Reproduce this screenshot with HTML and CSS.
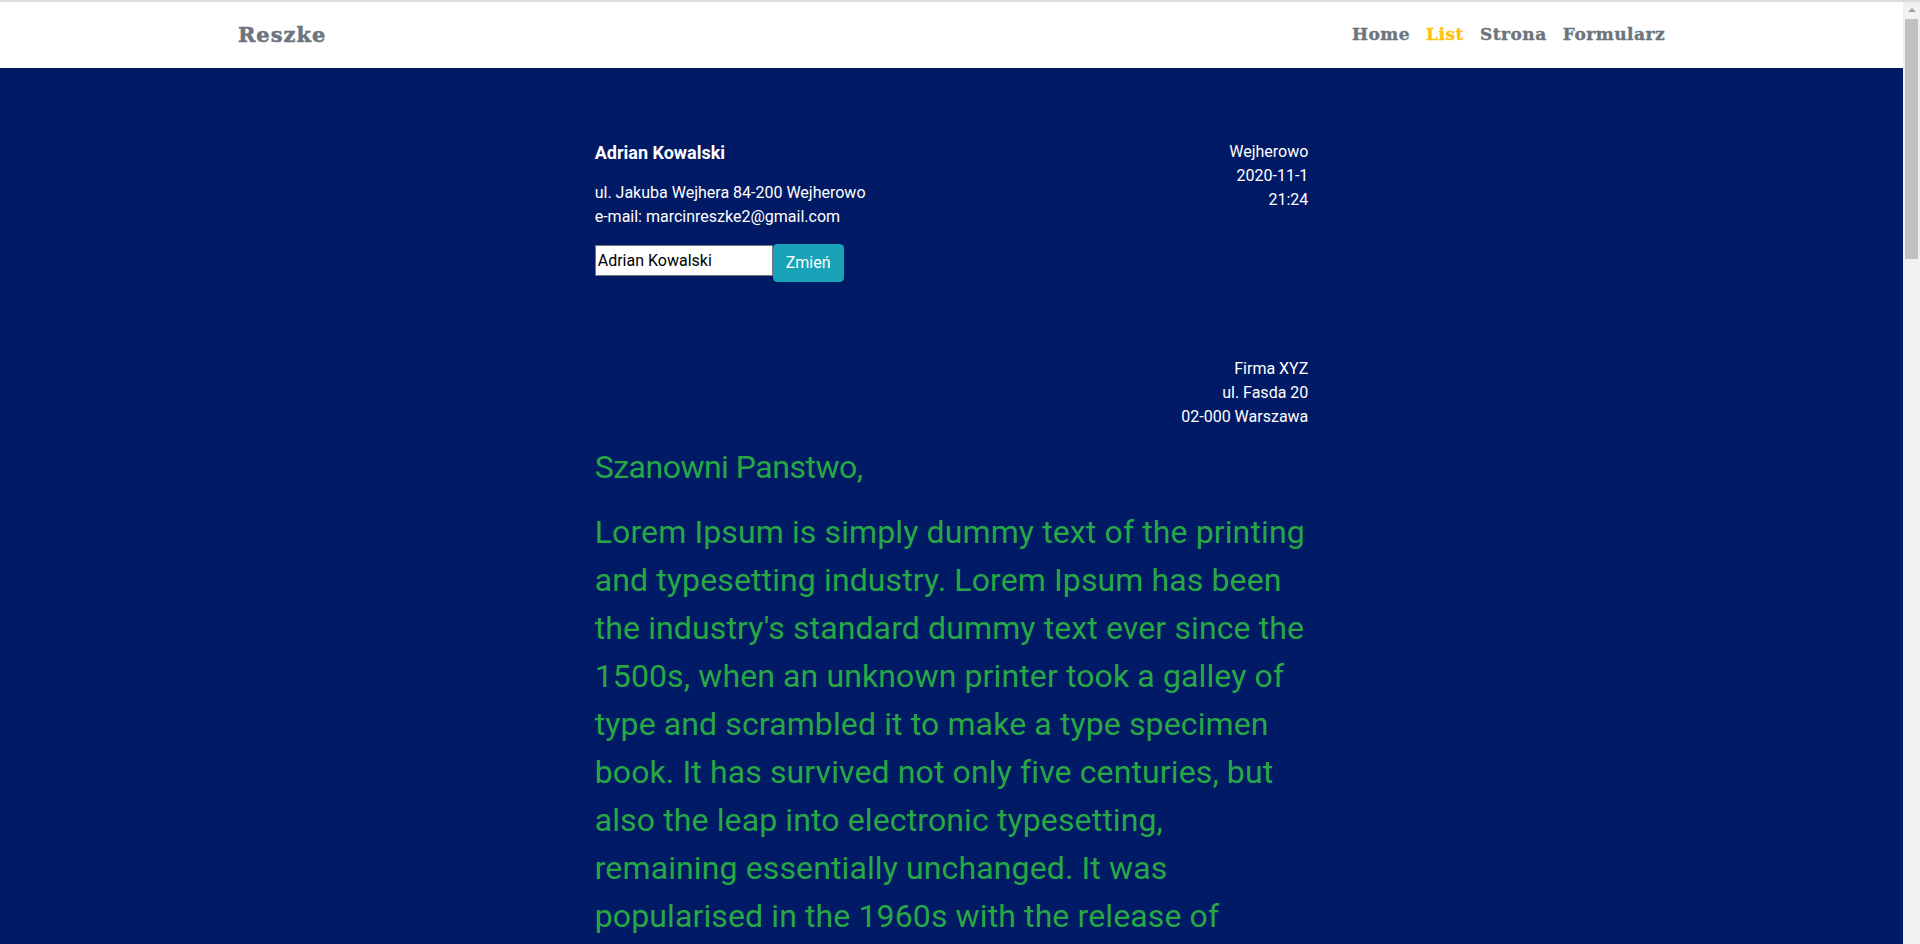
FILE: index.html
```html
<!DOCTYPE html>
<html lang="pl">
<head>
<meta charset="utf-8">
<title>Reszke - List</title>
<link rel="stylesheet" href="styles.css">
</head>
<body>
<div class="viewport">
  <header class="topbar">
    <nav class="topbar-inner">
      <a class="brand" href="#">Reszke</a>
      <ul class="menu">
        <li><a class="menu-link" href="#">Home</a></li>
        <li><a class="menu-link active" href="#">List</a></li>
        <li><a class="menu-link" href="#">Strona</a></li>
        <li><a class="menu-link" href="#">Formularz</a></li>
      </ul>
    </nav>
  </header>
  <main class="page">
    <div class="letter">
      <div class="letter-head">
        <div class="sender">
          <p class="sender-name">Adrian Kowalski</p>
          <p class="sender-address">ul. Jakuba Wejhera 84-200 Wejherowo<br>e-mail: marcinreszke2@gmail.com</p>
          <form class="name-form"><input class="name-input" type="text" value="Adrian Kowalski"><button class="btn-change" type="button">Zmień</button></form>
        </div>
        <div class="place-date">Wejherowo<br>2020-11-1<br>21:24</div>
      </div>
      <p class="recipient">Firma XYZ<br>ul. Fasda 20<br>02-000 Warszawa</p>
      <p class="greeting">Szanowni Panstwo,</p>
      <p class="body-text">Lorem Ipsum is simply dummy text of the printing and typesetting industry. Lorem Ipsum has been the industry's standard dummy text ever since the 1500s, when an unknown printer took a galley of type and scrambled it to make a type specimen book. It has survived not only five centuries, but also the leap into electronic typesetting, remaining essentially unchanged. It was popularised in the 1960s with the release of Letraset sheets containing Lorem Ipsum passages, and more recently with desktop publishing software like Aldus PageMaker including versions of Lorem Ipsum.</p>
    </div>
  </main>
</div>
<div class="scrollbar" aria-hidden="true">
  <div class="scroll-arrow"></div>
  <div class="scroll-thumb"></div>
</div>
</body>
</html>
```
FILE: styles.css
```css
html, body {
  margin: 0;
  padding: 0;
}
body {
  font-family: Roboto, "Noto Sans", "Liberation Sans", sans-serif;
  font-size: 16px;
  line-height: 1.5;
  color: #212529;
  background: #001a65;
  border-top: 2px solid #dcdcdc;
}
p {
  margin: 0 0 16px 0;
}
.viewport {
  width: calc(100% - 17px);
}
.topbar {
  background: #ffffff;
}
.topbar-inner {
  width: 75%;
  margin: 0 auto;
  height: 66px;
  display: flex;
  align-items: center;
  justify-content: space-between;
}
.brand {
  font-family: "DejaVu Serif", "Liberation Serif", serif;
  font-weight: 700;
  font-size: 21px;
  letter-spacing: 1px;
  color: #6c757d;
  text-decoration: none;
  -webkit-text-stroke: 0.5px #6c757d;
}
.menu {
  list-style: none;
  margin: 0;
  padding: 0;
  display: flex;
  gap: 16px;
}
.menu-link {
  font-family: "DejaVu Serif", "Liberation Serif", serif;
  font-weight: 700;
  font-size: 17px;
  letter-spacing: 0.5px;
  color: #6c757d;
  text-decoration: none;
  -webkit-text-stroke: 0.4px #6c757d;
}
.menu-link.active {
  color: #ffc107;
  -webkit-text-stroke: 0.4px #ffc107;
}
.page {
  background: #001a65;
  padding-top: 71px;
  min-height: 900px;
}
.letter {
  width: 37.5%;
  margin: 0 auto;
  color: #ffffff;
}
.letter-head {
  display: flex;
  justify-content: space-between;
  align-items: flex-start;
  margin-bottom: 75px;
}
.sender-name {
  font-size: 18px;
  font-weight: 700;
  margin-bottom: 15px;
}
.sender-address {
  margin-bottom: 15px;
}
.name-form {
  display: flex;
  align-items: flex-start;
  margin: 0;
}
.name-input {
  width: 178px;
  height: 31px;
  box-sizing: border-box;
  margin-top: 1px;
  padding: 1px 2px;
  border: 1px solid #767676;
  font-family: inherit;
  font-size: 16px;
  color: #000000;
  background: #ffffff;
}
.btn-change {
  height: 38px;
  padding: 6px 12px;
  border: 1px solid #17a2b8;
  border-radius: 4px;
  background: #17a2b8;
  color: #ffffff;
  font-family: inherit;
  font-size: 16px;
  line-height: 24px;
}
.place-date {
  text-align: right;
  padding-top: 1px;
}
.recipient {
  text-align: right;
  margin-bottom: 14px;
}
.greeting,
.body-text {
  font-size: 32px;
  line-height: 48px;
  color: #28a745;
  letter-spacing: 0.12px;
}
.greeting {
  margin-bottom: 17px;
  letter-spacing: -0.5px;
}
.scrollbar {
  position: fixed;
  top: 2px;
  right: 0;
  bottom: 0;
  width: 17px;
  background: #f1f1f1;
}
.scroll-arrow {
  width: 0;
  height: 0;
  margin: 6px auto 0;
  border-left: 4px solid transparent;
  border-right: 4px solid transparent;
  border-bottom: 4px solid #a3a3a3;
}
.scroll-thumb {
  position: absolute;
  top: 17px;
  left: 2px;
  width: 13px;
  height: 240px;
  background: #c1c1c1;
}
```
